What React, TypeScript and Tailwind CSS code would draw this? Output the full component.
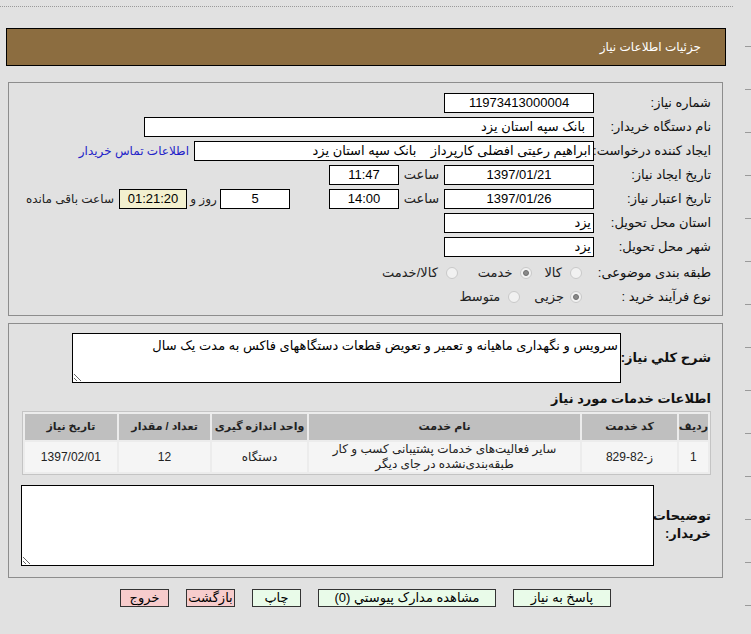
import React from "react";

const Box = ({
  w,
  center,
  bg = "bg-white",
  children,
}: {
  w: string;
  center?: boolean;
  bg?: string;
  children?: React.ReactNode;
}) => (
  <div
    className={`${w} ${bg} h-[20px] shrink-0 border border-black flex items-center px-[2px] text-[13px] text-black whitespace-nowrap overflow-hidden ${
      center ? "justify-center" : "justify-start"
    }`}
  >
    {children}
  </div>
);

const Label = ({ children }: { children: React.ReactNode }) => (
  <div className="w-[117px] shrink-0 text-right whitespace-nowrap text-[13px] text-[#111]">{children}</div>
);

const Radio = ({ checked }: { checked?: boolean }) => (
  <span className="w-[12px] h-[12px] shrink-0 rounded-full border border-[#c9c9c9] bg-[#f1f1f1] flex items-center justify-center">
    {checked && <span className="w-[6px] h-[6px] rounded-full bg-[#8a8a8a] border border-[#6f6f6f]" />}
  </span>
);

const Btn = ({ w, pink, children }: { w: string; pink?: boolean; children: React.ReactNode }) => (
  <div
    className={`${w} h-[18px] border border-[#333] flex items-center justify-center text-[13px] text-black whitespace-nowrap ${
      pink ? "bg-[#f7cccc]" : "bg-[#e9fbe9]"
    }`}
  >
    {children}
  </div>
);

function App() {
  const dashes = Array.from({ length: 14 });
  return (
    <div className="w-[751px] h-[634px] bg-[#e1e1e1] overflow-hidden flex font-['Liberation_Sans','DejaVu_Sans',sans-serif]">
      <div className="w-[735px] shrink-0">
        <div className="mt-[6px] w-[733px] border-t border-dotted border-[#9a9a9a]" />

        {/* header bar */}
        <div
          dir="rtl"
          className="mt-[21px] ml-[6px] w-[720px] h-[38px] bg-[#8c6d40] border border-black flex items-center pr-[24px] text-[12px] text-white"
        >
          جزئیات اطلاعات نیاز
        </div>

        {/* panel 1 */}
        <div dir="rtl" className="mt-[16px] ml-[8px] w-[715px] h-[234px] border border-[#8d8d8d] pt-[8px] pr-[11px]">
          <div className="h-[24px] flex items-center">
            <Label>شماره نیاز:</Label>
            <Box w="w-[150px]" center>
              11973413000004
            </Box>
          </div>
          <div className="h-[24px] flex items-center">
            <Label>نام دستگاه خریدار:</Label>
            <Box w="w-[450px]">
              <span className="pr-[6px]">بانک سپه استان یزد</span>
            </Box>
          </div>
          <div className="h-[24px] flex items-center">
            <Label>ایجاد کننده درخواست:</Label>
            <Box w="w-[400px]">ابراهیم رعیتی افضلی کارپرداز&nbsp;&nbsp;&nbsp; بانک سپه استان یزد</Box>
            <a className="mr-[5px] text-[12px] text-[#2323c8] whitespace-nowrap">اطلاعات تماس خریدار</a>
          </div>
          <div className="h-[24px] flex items-center">
            <Label>تاریخ ایجاد نیاز:</Label>
            <Box w="w-[150px]" center>
              1397/01/21
            </Box>
            <div className="w-[45px] text-center text-[13px] text-[#222]">ساعت</div>
            <Box w="w-[70px]" center>
              11:47
            </Box>
          </div>
          <div className="h-[24px] flex items-center">
            <Label>تاریخ اعتبار نیاز:</Label>
            <Box w="w-[150px]" center>
              1397/01/26
            </Box>
            <div className="w-[45px] text-center text-[13px] text-[#222]">ساعت</div>
            <Box w="w-[70px]" center>
              14:00
            </Box>
            <div className="w-[39px]" />
            <Box w="w-[70px]" center>
              5
            </Box>
            <div className="w-[33px] text-center text-[12px] text-[#222] whitespace-nowrap">روز و</div>
            <Box w="w-[68px]" center bg="bg-[#f3f0cf]">
              01:21:20
            </Box>
            <div className="mr-[5px] text-[12px] text-[#222] whitespace-nowrap">ساعت باقی مانده</div>
          </div>
          <div className="h-[24px] flex items-center">
            <Label>استان محل تحویل:</Label>
            <Box w="w-[150px]">یزد</Box>
          </div>
          <div className="h-[24px] flex items-center">
            <Label>شهر محل تحویل:</Label>
            <Box w="w-[150px]">یزد</Box>
          </div>
          <div className="mt-[2px] h-[24px] flex items-center text-[13px] text-[#222]">
            <Label>طبقه بندی موضوعی:</Label>
            <div className="pr-[12px] flex items-center">
              <Radio />
              <span className="mr-[8px]">کالا</span>
              <span className="mr-[12px]">
                <Radio checked />
              </span>
              <span className="mr-[8px]">خدمت</span>
              <span className="mr-[20px]">
                <Radio />
              </span>
              <span className="mr-[8px]">کالا/خدمت</span>
            </div>
          </div>
          <div className="h-[24px] flex items-center text-[13px] text-[#222]">
            <Label>نوع فرآیند خرید :</Label>
            <div className="pr-[12px] flex items-center">
              <Radio checked />
              <span className="mr-[6px]">جزیی</span>
              <span className="mr-[14px]">
                <Radio />
              </span>
              <span className="mr-[8px]">متوسط</span>
            </div>
          </div>
        </div>

        {/* panel 2 */}
        <div dir="rtl" className="mt-[7px] ml-[8px] w-[715px] h-[255px] border border-[#8d8d8d] pt-[9px] pr-[11px] pl-[12px]">
          <div className="flex items-center">
            <div className="w-[90px] shrink-0 text-right text-[13px] font-bold text-[#111] whitespace-nowrap">شرح کلي نیاز:</div>
            <textarea
              readOnly
              className="w-[549px] h-[50px] border border-black bg-white text-[13px] text-black px-[2px] py-[2px] outline-none"
              defaultValue="سرویس و نگهداری ماهیانه و تعمیر و تعویض قطعات دستگاههای فاکس به مدت یک سال"
            />
          </div>
          <div className="mt-[6px] text-[13px] font-bold text-[#111]">اطلاعات خدمات مورد نیاز</div>
          <table className="mt-[2px] w-[689px] border border-[#c4c4c4] border-separate border-spacing-[2px] bg-[#ececec] text-[12px] text-[#222]">
            <thead>
              <tr className="h-[26px] bg-[#bfbfbf] font-bold text-[11px] text-[#222]">
                <th className="w-[26px] font-bold">ردیف</th>
                <th className="w-[95px] font-bold">کد خدمت</th>
                <th className="w-[273px] font-bold">نام خدمت</th>
                <th className="w-[95px] font-bold">واحد اندازه گیری</th>
                <th className="w-[92px] font-bold">تعداد / مقدار</th>
                <th className="w-[92px] font-bold">تاریخ نیاز</th>
              </tr>
            </thead>
            <tbody>
              <tr className="h-[30px] bg-[#f5f5f5] text-center">
                <td>1</td>
                <td>
                  <span dir="ltr">829-82-ز</span>
                </td>
                <td className="leading-[15px]">
                  سایر فعالیت‌های خدمات پشتیبانی کسب و کار
                  <br />
                  طبقه‌بندی‌نشده در جای دیگر
                </td>
                <td>دستگاه</td>
                <td>12</td>
                <td>1397/02/01</td>
              </tr>
            </tbody>
          </table>
          <div className="mt-[10px] flex items-center">
            <div className="w-[57px] shrink-0 text-right text-[13px] font-bold text-[#111] leading-[18px]">
              توضیحات
              <br />
              خریدار:
            </div>
            <textarea readOnly className="w-[635px] h-[81px] border border-black bg-white outline-none" />
          </div>
        </div>

        {/* buttons */}
        <div dir="rtl" className="mt-[11px] ml-[8px] w-[715px] flex justify-center gap-[17px]">
          <Btn w="w-[98px]">پاسخ به نیاز</Btn>
          <Btn w="w-[178px]">مشاهده مدارک پیوستي (0)</Btn>
          <Btn w="w-[49px]">چاپ</Btn>
          <Btn w="w-[49px]" pink>
            بازگشت
          </Btn>
          <Btn w="w-[49px]" pink>
            خروج
          </Btn>
        </div>
      </div>

      {/* right gutter ticks */}
      <div className="w-[16px] shrink-0 flex flex-col items-end pt-[46px] gap-[42px]">
        {dashes.map((_, i) => (
          <div key={i} className="w-[6px] h-px bg-[#9a9a9a]" />
        ))}
      </div>
    </div>
  );
}

export default App;
